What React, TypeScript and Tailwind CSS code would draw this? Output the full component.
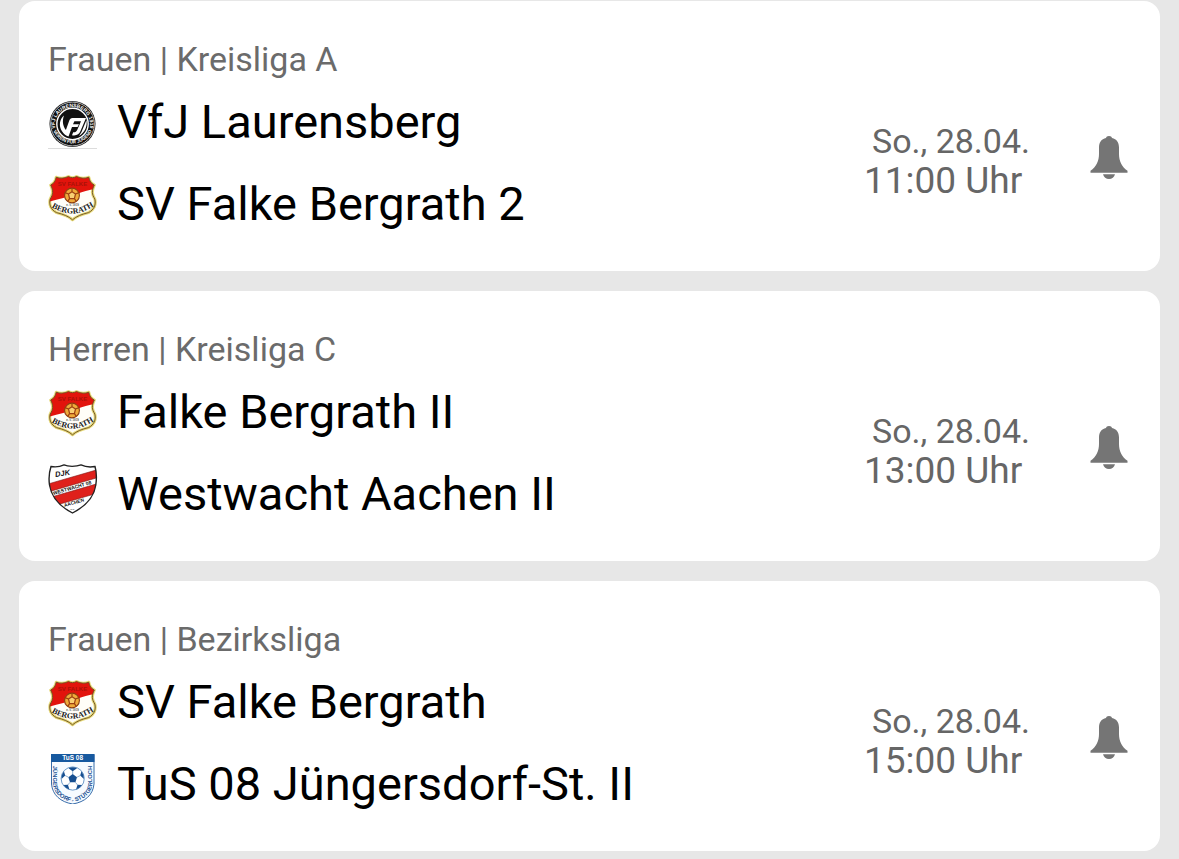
import React from "react";

type ClubId = "laurensberg" | "bergrath" | "westwacht" | "juengersdorf";

interface Team {
  name: string;
  club: ClubId;
}

interface Match {
  league: string;
  teams: [Team, Team];
  date: string;
  time: string;
}

const matches: Match[] = [
  {
    league: "Frauen | Kreisliga A",
    teams: [
      { name: "VfJ Laurensberg", club: "laurensberg" },
      { name: "SV Falke Bergrath 2", club: "bergrath" },
    ],
    date: "So., 28.04.",
    time: "11:00 Uhr",
  },
  {
    league: "Herren | Kreisliga C",
    teams: [
      { name: "Falke Bergrath II", club: "bergrath" },
      { name: "Westwacht Aachen II", club: "westwacht" },
    ],
    date: "So., 28.04.",
    time: "13:00 Uhr",
  },
  {
    league: "Frauen | Bezirksliga",
    teams: [
      { name: "SV Falke Bergrath", club: "bergrath" },
      { name: "TuS 08 Jüngersdorf-St. II", club: "juengersdorf" },
    ],
    date: "So., 28.04.",
    time: "15:00 Uhr",
  },
];

function LaurensbergLogo({ id }: { id: string }) {
  return (
    <svg viewBox="0 0 50 50" className="size-full" aria-hidden="true">
      <path d="M0 49.5H49" stroke="#dcdcdc" />
      <circle cx="24.5" cy="25" r="23" fill="#111" />
      <circle cx="24.5" cy="25" r="21.9" fill="none" stroke="#ddd" strokeWidth="0.8" />
      <circle cx="24.5" cy="25" r="15.7" fill="#111" stroke="#fff" strokeWidth="1.4" />
      <path id={`${id}-top`} d="M7.3 29.5A17.6 17.6 0 1 1 41.7 29.5" fill="none" />
      <path id={`${id}-bottom`} d="M5.8 33A21 21 0 0 0 43.2 33" fill="none" />
      <g fill="#fff" fontFamily="Liberation Sans, sans-serif" fontWeight="700" fontSize="5" textAnchor="middle">
        <text><textPath href={`#${id}-top`} startOffset="50%">VFJ LAURENSBERG 1919</textPath></text>
        <text fontSize="4.6"><textPath href={`#${id}-bottom`} startOffset="50%">VEREIN FÜR JUGEND</textPath></text>
      </g>
      <path
        d="M16 16.5C11.5 20 10.5 27 14 32.3C16 35.3 18 36.6 20.5 37.5L24 28H29.6L31 25.3H25L26.4 22.3H33L29.2 31C28.3 33 27 33.5 25.2 33.3L24 36.2C28.5 37 31 35.4 32.5 32L38 19H24.5C22.7 19 22 20 21.3 21.6L17.9 31C14.8 27 14 22 16 16.5Z"
        fill="#fff"
      />
      <path d="M38.5 21C39.5 27 37 33.5 31 37L33.5 33Z" fill="#fff" />
    </svg>
  );
}

function BergrathLogo({ id }: { id: string }) {
  const shield =
    "M8.2 3.2C12 4.7 16 4.5 20.5 2.5C23 4 26 4 28.5 2.5C33 4.5 37 4.7 40.8 3.2C41.5 7 43.2 9.5 46.3 11C43.5 17 43.8 20 46.8 25C48.3 30.5 46 36 40.5 38.6C34 40.2 28.5 42.2 24.5 45.8C20.5 42.2 15 40.2 8.5 38.6C3 36 .7 30.5 2.2 25C5.2 20 5.5 17 2.7 11C5.8 9.5 7.5 7 8.2 3.2Z";
  return (
    <svg viewBox="0 0 50 50" className="size-full" aria-hidden="true">
      <clipPath id={`${id}-shield`}>
        <path d={shield} />
      </clipPath>
      <path d={shield} fill="#fffef8" stroke="#e6d979" strokeWidth="3" strokeLinejoin="round" />
      <path d="M0 0H50V14.5C42 15.5 35 17.5 28 20.5C20 23 10 25 0 28Z" fill="#e2140c" clipPath={`url(#${id}-shield)`} />
      <path d={shield} fill="none" stroke="#6b4d21" strokeWidth="0.9" />
      <text x="24.5" y="11.5" textAnchor="middle" fontFamily="Liberation Sans, sans-serif" fontWeight="700" fontSize="6" fill="#a81208">
        SV FALKE
      </text>
      <circle cx="24" cy="21.5" r="7.4" fill="#efab3b" stroke="#8e3e10" strokeWidth="1.1" />
      <path
        d="M24 17.8L27.5 20L26.4 24.6H21.6L20.5 20ZM24 17.8V14.5M27.5 20L31 18.6M26.4 24.6L28.5 27.7M21.6 24.6L19.5 27.7M20.5 20L17 18.6"
        fill="#f8cf74"
        stroke="#9c3f10"
        strokeWidth="1.2"
      />
      <text x="24.5" y="32.2" textAnchor="middle" fontFamily="Liberation Sans, sans-serif" fontWeight="700" fontSize="2.8" fill="#555">
        e. V. 1919
      </text>
      <path id={`${id}-name`} d="M3.5 33Q24.5 46.6 46 32" fill="none" />
      <text fontFamily="Liberation Serif, serif" fontWeight="700" fontSize="8" textAnchor="middle" fill="#181818">
        <textPath href={`#${id}-name`} startOffset="50%">BERGRATH</textPath>
      </text>
    </svg>
  );
}

function WestwachtLogo({ id }: { id: string }) {
  const shield =
    "M3 2.5C8 3.4 12 2.8 16 .9C20 2.8 28 2.8 33 .9C37 2.8 42 3.4 47 2.5C48.6 8 48.8 14 47.8 21C46 34 36 43 24.5 49C13 43 3.5 34 1.5 21C.5 14 1.2 8 3 2.5Z";
  return (
    <svg viewBox="0 0 50 50" className="size-full" aria-hidden="true">
      <clipPath id={`${id}-shield`}>
        <path d={shield} />
      </clipPath>
      <path d={shield} fill="#fff" />
      <g clipPath={`url(#${id}-shield)`}>
        <path d="M0 20L50 5.5V13.5L0 28Z" fill="#df211c" />
        <path d="M0 34L50 19.5V29L0 43.5Z" fill="#df211c" />
        <path d="M0 20L50 5.5M0 28L50 13.5M0 34L50 19.5M0 43.5L50 29" stroke="#7c1714" strokeWidth="0.6" />
      </g>
      <path d={shield} fill="none" stroke="#222" strokeWidth="1.4" />
      <g fontFamily="Liberation Sans, sans-serif" fontWeight="700" fill="#111">
        <text x="7.5" y="13" fontSize="7.5" fontStyle="italic" transform="rotate(-9 7.5 13)">DJK</text>
        <text x="5.5" y="31" fontSize="5" transform="rotate(-16 5.5 31)">WESTWACHT 08</text>
        <text x="16.5" y="43" fontSize="4.8" transform="rotate(-16 16.5 43)">AACHEN</text>
        <text x="22.5" y="46" fontSize="2.5">e.V.</text>
      </g>
    </svg>
  );
}

function JuengersdorfLogo({ id }: { id: string }) {
  return (
    <svg viewBox="0 0 50 50" className="size-full" aria-hidden="true">
      <path d="M3.5 .5H46V30C45 41 37 48 24.7 50C12.5 48 4.5 41 3.5 30Z" fill="#f7fbff" stroke="#215b9f" strokeWidth="0.9" />
      <path d="M3 0H46.5V8H3Z" fill="#17599f" />
      <text x="24.7" y="6.4" textAnchor="middle" fontFamily="Liberation Sans, sans-serif" fontWeight="700" fontSize="6.5" fill="#fff">
        TuS 08
      </text>
      <path id={`${id}-name`} d="M5 9V29C6 40 13 45.5 24.7 48.3C36.5 45.5 43.5 40 44.5 29V9" fill="none" />
      <text fontFamily="Liberation Sans, sans-serif" fontWeight="700" fontSize="5.8" textAnchor="middle" fill="#174f91">
        <textPath href={`#${id}-name`} startOffset="50%">JÜNGERSDORF - STÜTGERLOCH</textPath>
      </text>
      <circle cx="24.7" cy="24.5" r="11.6" fill="#fff" stroke="#5e91c4" strokeWidth="0.9" />
      <g fill="#164f91">
        <path d="M24.7 20L29 23.2L27.4 28.3H22L20.4 23.2Z" />
        <path d="M20.5 14.2Q24.7 12.2 29 14.2L24.7 17.2Z" />
        <path d="M33.5 17.2Q36.4 21 35.9 25L32.2 21.5Z" />
        <path d="M15.9 17.2Q13 21 13.5 25L17.2 21.5Z" />
        <path d="M34 31Q31.5 34.6 28 35.4L29.5 30.8Z" />
        <path d="M15.4 31Q17.9 34.6 21.4 35.4L19.9 30.8Z" />
      </g>
      <path
        d="M24.7 20V17M29 23.2L32.3 21.5M27.4 28.3L29.6 31M22 28.3L19.8 31M20.4 23.2L17.1 21.5"
        stroke="#5e91c4"
        strokeWidth="0.7"
      />
    </svg>
  );
}

const logos: Record<ClubId, React.ComponentType<{ id: string }>> = {
  laurensberg: LaurensbergLogo,
  bergrath: BergrathLogo,
  westwacht: WestwachtLogo,
  juengersdorf: JuengersdorfLogo,
};

function ClubLogo({ club }: { club: ClubId }) {
  const id = React.useId();
  const Logo = logos[club];
  return (
    <div className="size-[50px]">
      <Logo id={id} />
    </div>
  );
}

function BellIcon() {
  return (
    <svg viewBox="0 0 38 44" className="h-11 w-[38px]" fill="#757575" aria-hidden="true">
      <path d="M19 0C17.3 0 16.2 .8 16 2C11.4 3 9 6.3 9 11.5V18C9 25 6.3 30.6 .5 34.8V36.8H37.5V34.8C31.7 30.6 29 25 29 18V11.5C29 6.3 26.6 3 22 2C21.8 .8 20.7 0 19 0Z" />
      <path d="M13 38.3H25C24.2 41.4 22 43 19 43C16 43 13.8 41.4 13 38.3Z" />
    </svg>
  );
}

function MatchCard({ match }: { match: Match }) {
  return (
    <article className="rounded-2xl bg-white pt-[38px] pr-8 pb-[26px] pl-[29px]">
      <h2 className="pb-0.5 text-[34px] leading-10 text-[#6b6b6b]">{match.league}</h2>
      <div className="flex items-center justify-between">
        <div className="flex items-start gap-[19px]">
          <div className="flex flex-col gap-[25px] pt-[18px]">
            {match.teams.map((team) => (
              <ClubLogo key={team.name} club={team.club} />
            ))}
          </div>
          <div className="text-[47px] leading-[82px] whitespace-nowrap text-black">
            {match.teams.map((team) => (
              <p key={team.name}>{team.name}</p>
            ))}
          </div>
        </div>
        <div className="flex items-center gap-[60px] pb-1">
          <div className="leading-10 whitespace-nowrap text-[#666]">
            <p className="pl-2 text-[34px]">{match.date}</p>
            <p className="text-[37px]">{match.time}</p>
          </div>
          <button type="button" aria-label="Benachrichtigung" className="pb-1.5">
            <BellIcon />
          </button>
        </div>
      </div>
    </article>
  );
}

export default function App() {
  return (
    <main className="flex min-h-screen flex-col gap-5 bg-[#e7e7e7] px-[19px] pt-px pb-2 font-[Roboto,sans-serif]">
      {matches.map((match) => (
        <MatchCard key={match.league} match={match} />
      ))}
    </main>
  );
}
